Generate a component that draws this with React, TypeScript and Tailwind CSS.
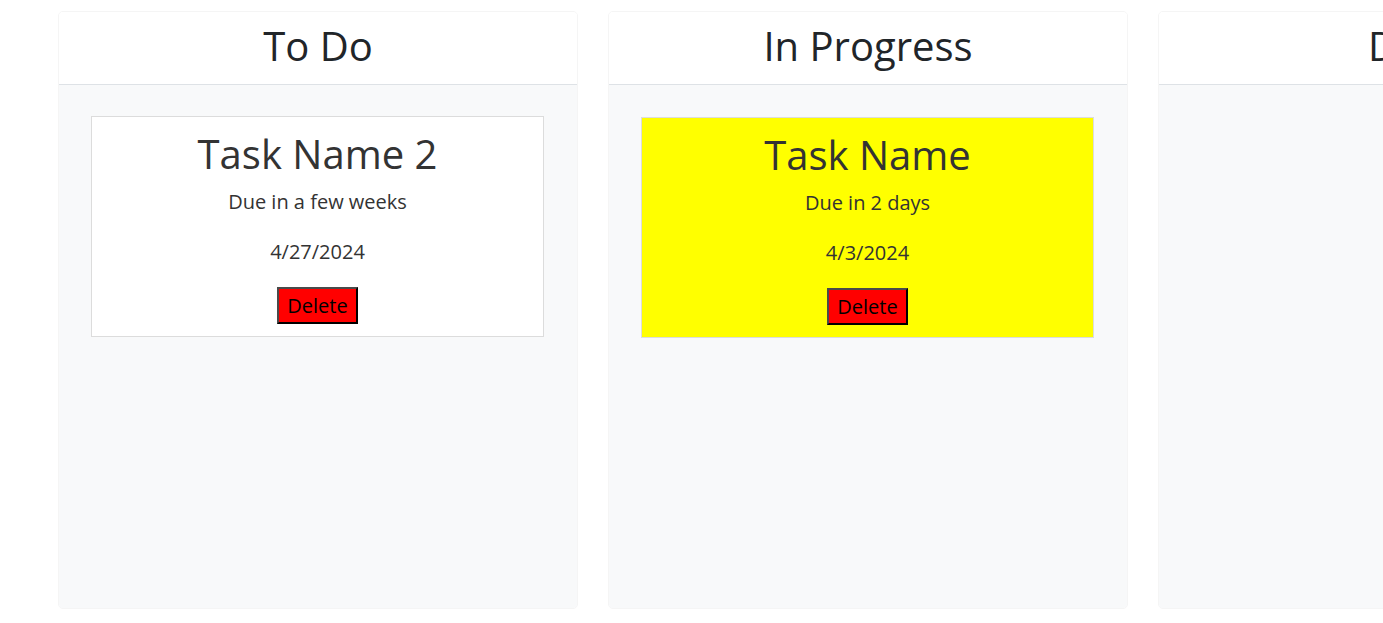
import React from "react";

type Task = {
  name: string;
  due: string;
  date: string;
  highlight?: boolean;
};

type Column = {
  title: string;
  tasks: Task[];
};

const columns: Column[] = [
  {
    title: "To Do",
    tasks: [{ name: "Task Name 2", due: "Due in a few weeks", date: "4/27/2024" }],
  },
  {
    title: "In Progress",
    tasks: [{ name: "Task Name", due: "Due in 2 days", date: "4/3/2024", highlight: true }],
  },
  { title: "Done", tasks: [] },
];

function TaskCard({ task }: { task: Task }) {
  return (
    <div
      className={`flex flex-col items-center border border-[#dcdcdc] px-4 pt-[13px] pb-[12px] text-[#333333] ${
        task.highlight ? "mt-px bg-[#ffff00]" : "bg-white"
      }`}
    >
      <h2 className="mb-[9px] text-[40px] leading-[48px] font-normal">{task.name}</h2>
      <p className="mb-[20px] text-[20px] leading-[30px]">{task.due}</p>
      <p className="mb-[20px] text-[20px] leading-[30px]">{task.date}</p>
      <button className="h-[37px] border-2 border-t-[#4a4a4a] border-l-[#4a4a4a] border-r-black border-b-black bg-[#ff0000] px-[8px] text-[20px] leading-[30px] text-black">
        Delete
      </button>
    </div>
  );
}

export default function App() {
  return (
    <main
      className="h-screen w-screen overflow-hidden bg-white"
      style={{ fontFamily: '"Open Sans", "Liberation Sans", sans-serif' }}
    >
      <div className="flex gap-[30px] pt-[11px] pl-[58px]">
        {columns.map((col) => (
          <section
            key={col.title}
            className="flex h-[598px] w-[520px] shrink-0 flex-col overflow-hidden rounded-[5px] border border-[#f5f5f5]"
          >
            {/* Column header */}
            <div className="border-b border-[#dee2e6] bg-white px-4 pt-[10px] pb-[8px]">
              <h1 className="mb-[6px] text-center text-[40px] leading-[48px] font-normal text-[#212529]">
                {col.title}
              </h1>
            </div>

            {/* Tasks */}
            <div className="flex flex-1 flex-col gap-4 bg-[#f8f9fa] pl-[32px] pr-[33px] pt-[31px]">
              {col.tasks.map((t) => (
                <TaskCard key={t.name} task={t} />
              ))}
            </div>
          </section>
        ))}
      </div>
    </main>
  );
}
